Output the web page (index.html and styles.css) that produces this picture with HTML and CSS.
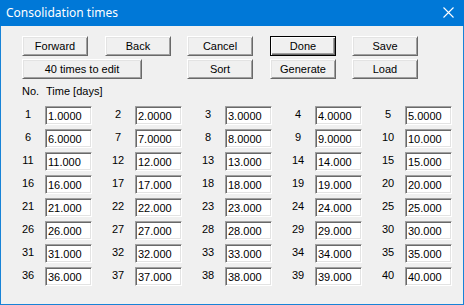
FILE: index.html
```html
<!DOCTYPE html>
<html lang="en">
<head>
    <meta charset="UTF-8">
    <title>Consolidation times</title>
    <link rel="stylesheet" href="styles.css">
</head>
<body>
    <div class="window">
        <div class="titlebar">
            <span class="title">Consolidation times</span>
            <svg class="close" width="11" height="11" viewBox="0 0 11 11">
                <path d="M0.5 0.5 L10.5 10.5 M10.5 0.5 L0.5 10.5" stroke="#fff" stroke-width="1.1" fill="none"/>
            </svg>
        </div>
        <div class="content">
            <div class="toolbar">
                <button class="btn">Forward</button>
                <button class="btn">Back</button>
                <button class="btn">Cancel</button>
                <button class="btn btn-default">Done</button>
                <button class="btn">Save</button>
                <button class="btn btn-wide">40 times to edit</button>
                <button class="btn">Sort</button>
                <button class="btn">Generate</button>
                <button class="btn">Load</button>
            </div>
            <div class="heading"><span class="col-no">No.</span>Time [days]</div>
            <div class="times" id="times">
                <!-- filled by the script below -->
            </div>
        </div>
    </div>

    <script>
        // 40 entries, 5 significant digits like the original dialog
        const grid = document.getElementById('times');
        for (let n = 1; n <= 40; n++) {
            const value = n < 10 ? n.toFixed(4) : n.toFixed(3);
            const entry = document.createElement('div');
            entry.className = 'entry';
            entry.innerHTML = `
                <span class="num">${n}</span>
                <input class="field" type="text" value="${value}">
            `;
            grid.appendChild(entry);
        }
    </script>
</body>
</html>
```

FILE: styles.css
```css
body {
    margin: 0;
    background: #fff;
}
.window {
    width: 464px;
    height: 305px;
    box-sizing: border-box;
    border: 1px solid #1883d7;
    border-top: none;
    background: #f0f0f0;
    font-family: 'Liberation Sans', Arial, sans-serif;
    font-size: 11px;
    color: #000;
}
.titlebar {
    height: 26px;
    margin: 0 -1px;
    background: #0078d7;
    display: flex;
    align-items: center;
    justify-content: space-between;
}
.title {
    font-family: 'Noto Sans', sans-serif;
    font-size: 12px;
    color: #fff;
    padding-left: 6px;
    padding-bottom: 1px;
}
.close {
    margin-right: 10px;
    margin-bottom: 1px;
}
.content {
    padding: 10px 0 0 16px;
}
.toolbar {
    margin-left: 5px;
    display: grid;
    grid-template-columns: 83px 82px 83px 82px 66px;
    grid-auto-rows: 20px;
    row-gap: 3px;
}
.btn {
    width: 66px;
    height: 20px;
    padding: 0;
    box-sizing: border-box;
    background: #f0f0f0;
    font-family: inherit;
    font-size: 11px;
    color: #000;
    border: 1px solid;
    border-color: #fff #696969 #696969 #fff;
    box-shadow: inset 1px 1px 0 #e3e3e3, inset -1px -1px 0 #a0a0a0;
}
.btn-default {
    border-color: #000;
    box-shadow: inset 1px 1px 0 #fff, inset -1px -1px 0 #696969, inset -2px -2px 0 #a0a0a0;
}
.btn-wide {
    grid-column: span 2;
    width: 120px;
}
.heading {
    margin: 6px 0 0 5px;
    line-height: 13px;
}
.col-no {
    display: inline-block;
    width: 24px;
}
.times {
    margin-top: 8px;
    display: grid;
    grid-template-columns: repeat(5, 90px);
    grid-auto-rows: 19px;
    row-gap: 4px;
}
.entry {
    display: flex;
    align-items: center;
}
.num {
    width: 22px;
    text-align: center;
    margin-top: -3px;
}
.field {
    margin: 0 0 0 6px;
    width: 47px;
    height: 19px;
    box-sizing: border-box;
    padding: 1px 2px 0;
    background: #fff;
    font-family: inherit;
    font-size: 11px;
    color: #000;
    outline: none;
    border: 1px solid;
    border-color: #a0a0a0 #fff #fff #a0a0a0;
    box-shadow: inset 1px 1px 0 #696969, inset -1px -1px 0 #e3e3e3;
}
```
